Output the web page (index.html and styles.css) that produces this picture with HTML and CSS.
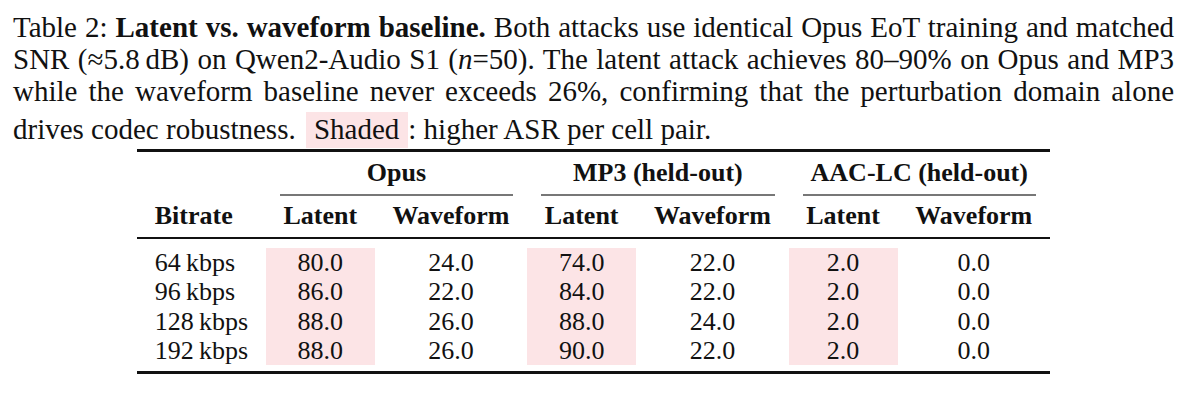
FILE: index.html
```html
<!DOCTYPE html>
<html lang="en">
<head>
<meta charset="utf-8">
<title>Table 2: Latent vs. waveform baseline</title>
<link rel="stylesheet" href="styles.css">
</head>
<body>
<div class="figure">
  <div class="caption">
    <span class="line">Table 2: <b>Latent vs. waveform baseline.</b> Both attacks use identical Opus EoT training and matched</span>
    <span class="line">SNR (≈5.8&#8201;dB) on Qwen2-Audio S1 (<i>n</i>=50). The latent attack achieves 80–90% on Opus and MP3</span>
    <span class="line">while the waveform baseline never exceeds 26%, confirming that the perturbation domain alone</span>
    <span class="line last">drives codec robustness. <span class="swatch">Shaded</span>: higher ASR per cell pair.</span>
  </div>
  <table class="results">
    <thead>
      <tr class="groups">
        <th class="blank"></th>
        <th colspan="2"><div class="grp">Opus</div></th>
        <th colspan="2"><div class="grp">MP3 (held-out)</div></th>
        <th colspan="2"><div class="grp">AAC-LC (held-out)</div></th>
      </tr>
      <tr class="cols">
        <th class="left">Bitrate</th>
        <th>Latent</th><th>Waveform</th>
        <th>Latent</th><th>Waveform</th>
        <th>Latent</th><th>Waveform</th>
      </tr>
    </thead>
    <tbody>
      <tr>
        <td class="left">64&#8201;kbps</td>
        <td class="hl">80.0</td><td>24.0</td>
        <td class="hl">74.0</td><td>22.0</td>
        <td class="hl">2.0</td><td>0.0</td>
      </tr>
      <tr>
        <td class="left">96&#8201;kbps</td>
        <td class="hl">86.0</td><td>22.0</td>
        <td class="hl">84.0</td><td>22.0</td>
        <td class="hl">2.0</td><td>0.0</td>
      </tr>
      <tr>
        <td class="left">128&#8201;kbps</td>
        <td class="hl">88.0</td><td>26.0</td>
        <td class="hl">88.0</td><td>24.0</td>
        <td class="hl">2.0</td><td>0.0</td>
      </tr>
      <tr>
        <td class="left">192&#8201;kbps</td>
        <td class="hl">88.0</td><td>26.0</td>
        <td class="hl">90.0</td><td>22.0</td>
        <td class="hl">2.0</td><td>0.0</td>
      </tr>
    </tbody>
  </table>
</div>
</body>
</html>
```

FILE: styles.css
```css
body {
  margin: 0;
  background: #ffffff;
  color: #111111;
  font-family: "Liberation Serif", "Times New Roman", serif;
}

.figure {
  width: 1161px;
  margin-left: 13px;
  padding-top: 11px;
}

.caption {
  font-size: 29px;
  line-height: 32px;
}

.caption .line {
  display: block;
  text-align: justify;
  text-align-last: justify;
}

.caption .line.last {
  text-align-last: left;
  margin-top: 6px;
}

.swatch {
  background: #fce4e6;
  padding: 1px 9px 3px 8px;
  margin-left: 3px;
}

.results {
  margin: 4px auto 0;
  border-collapse: separate;
  border-spacing: 0;
  border-top: 3px solid #111111;
  border-bottom: 3px solid #111111;
  font-size: 26px;
  line-height: 29px;
}

.results th,
.results td {
  padding: 0 17.7px;
  text-align: center;
  white-space: nowrap;
}

.results th {
  font-weight: bold;
}

.results .left {
  text-align: left;
}

.groups th {
  padding: 0;
}

.groups .grp {
  margin: 0 14px;
  padding: 6px 0 7px;
  border-bottom: 2px solid #777777;
}

.cols th {
  padding: 5px 17.7px 7px;
  border-bottom: 2px solid #111111;
}

.results td {
  line-height: 29.25px;
}

.results tbody tr:first-child td {
  border-top: 9px solid transparent;
}

.results tbody tr:last-child td {
  border-bottom: 6px solid transparent;
}

.results .hl {
  background-color: #fce4e6;
  background-clip: padding-box;
}
```
